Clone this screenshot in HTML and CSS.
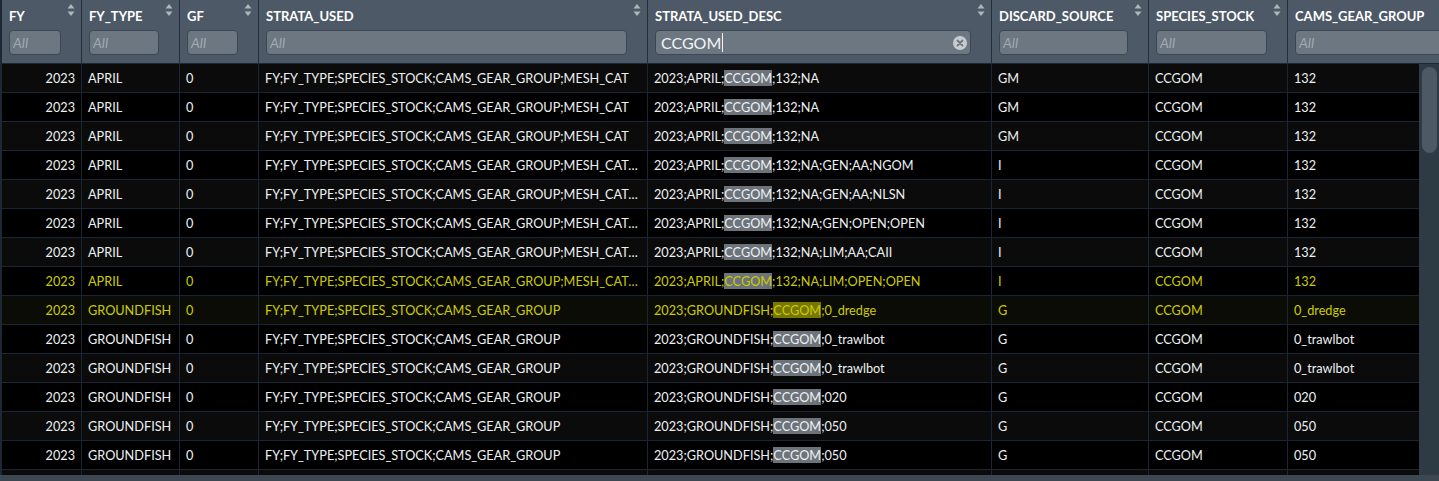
FILE: index.html
```html
<!DOCTYPE html>
<html>
<head>
<meta charset="utf-8">
<link rel="stylesheet" href="styles.css">
</head>
<body>
<div class="grid">
  <div class="thead">
    <div class="th"><div class="th-top"><span class="label">FY</span><svg class="sort" viewBox="0 0 8 12"><path d="M4 0 L7.5 4.5 H0.5 Z M4 12 L7.5 7.5 H0.5 Z"/></svg></div><div class="filter"><input placeholder="All"></div></div>
    <div class="th"><div class="th-top"><span class="label">FY_TYPE</span><svg class="sort" viewBox="0 0 8 12"><path d="M4 0 L7.5 4.5 H0.5 Z M4 12 L7.5 7.5 H0.5 Z"/></svg></div><div class="filter"><input placeholder="All"></div></div>
    <div class="th"><div class="th-top"><span class="label">GF</span><svg class="sort" viewBox="0 0 8 12"><path d="M4 0 L7.5 4.5 H0.5 Z M4 12 L7.5 7.5 H0.5 Z"/></svg></div><div class="filter"><input placeholder="All"></div></div>
    <div class="th"><div class="th-top"><span class="label">STRATA_USED</span><svg class="sort" viewBox="0 0 8 12"><path d="M4 0 L7.5 4.5 H0.5 Z M4 12 L7.5 7.5 H0.5 Z"/></svg></div><div class="filter"><input placeholder="All"></div></div>
    <div class="th"><div class="th-top"><span class="label">STRATA_USED_DESC</span><svg class="sort" viewBox="0 0 8 12"><path d="M4 0 L7.5 4.5 H0.5 Z M4 12 L7.5 7.5 H0.5 Z"/></svg></div><div class="filter active"><span class="val">CCGOM</span><span class="caret"></span><svg class="clear" viewBox="0 0 14 14"><circle cx="7" cy="7" r="7"/><path d="M4.5 4.5 L9.5 9.5 M9.5 4.5 L4.5 9.5"/></svg></div></div>
    <div class="th"><div class="th-top"><span class="label">DISCARD_SOURCE</span><svg class="sort" viewBox="0 0 8 12"><path d="M4 0 L7.5 4.5 H0.5 Z M4 12 L7.5 7.5 H0.5 Z"/></svg></div><div class="filter"><input placeholder="All"></div></div>
    <div class="th"><div class="th-top"><span class="label">SPECIES_STOCK</span><svg class="sort" viewBox="0 0 8 12"><path d="M4 0 L7.5 4.5 H0.5 Z M4 12 L7.5 7.5 H0.5 Z"/></svg></div><div class="filter"><input placeholder="All"></div></div>
    <div class="th"><div class="th-top"><span class="label">CAMS_GEAR_GROUP</span><svg class="sort" viewBox="0 0 8 12"><path d="M4 0 L7.5 4.5 H0.5 Z M4 12 L7.5 7.5 H0.5 Z"/></svg></div><div class="filter"><input placeholder="All"></div></div>
  </div>
  <div class="body">
    <div class="rows">
      <div class="row"><div class="td num">2023</div><div class="td">APRIL</div><div class="td">0</div><div class="td strata">FY;FY_TYPE;SPECIES_STOCK;CAMS_GEAR_GROUP;MESH_CAT</div><div class="td">2023;APRIL;<mark>CCGOM</mark>;132;NA</div><div class="td">GM</div><div class="td">CCGOM</div><div class="td">132</div></div>
      <div class="row"><div class="td num">2023</div><div class="td">APRIL</div><div class="td">0</div><div class="td strata">FY;FY_TYPE;SPECIES_STOCK;CAMS_GEAR_GROUP;MESH_CAT</div><div class="td">2023;APRIL;<mark>CCGOM</mark>;132;NA</div><div class="td">GM</div><div class="td">CCGOM</div><div class="td">132</div></div>
      <div class="row"><div class="td num">2023</div><div class="td">APRIL</div><div class="td">0</div><div class="td strata">FY;FY_TYPE;SPECIES_STOCK;CAMS_GEAR_GROUP;MESH_CAT</div><div class="td">2023;APRIL;<mark>CCGOM</mark>;132;NA</div><div class="td">GM</div><div class="td">CCGOM</div><div class="td">132</div></div>
      <div class="row"><div class="td num">2023</div><div class="td">APRIL</div><div class="td">0</div><div class="td strata">FY;FY_TYPE;SPECIES_STOCK;CAMS_GEAR_GROUP;MESH_CAT;GEARCODE;REGION</div><div class="td">2023;APRIL;<mark>CCGOM</mark>;132;NA;GEN;AA;NGOM</div><div class="td">I</div><div class="td">CCGOM</div><div class="td">132</div></div>
      <div class="row"><div class="td num">2023</div><div class="td">APRIL</div><div class="td">0</div><div class="td strata">FY;FY_TYPE;SPECIES_STOCK;CAMS_GEAR_GROUP;MESH_CAT;GEARCODE;REGION</div><div class="td">2023;APRIL;<mark>CCGOM</mark>;132;NA;GEN;AA;NLSN</div><div class="td">I</div><div class="td">CCGOM</div><div class="td">132</div></div>
      <div class="row"><div class="td num">2023</div><div class="td">APRIL</div><div class="td">0</div><div class="td strata">FY;FY_TYPE;SPECIES_STOCK;CAMS_GEAR_GROUP;MESH_CAT;GEARCODE;REGION</div><div class="td">2023;APRIL;<mark>CCGOM</mark>;132;NA;GEN;OPEN;OPEN</div><div class="td">I</div><div class="td">CCGOM</div><div class="td">132</div></div>
      <div class="row"><div class="td num">2023</div><div class="td">APRIL</div><div class="td">0</div><div class="td strata">FY;FY_TYPE;SPECIES_STOCK;CAMS_GEAR_GROUP;MESH_CAT;GEARCODE;REGION</div><div class="td">2023;APRIL;<mark>CCGOM</mark>;132;NA;LIM;AA;CAII</div><div class="td">I</div><div class="td">CCGOM</div><div class="td">132</div></div>
      <div class="row sel"><div class="td num">2023</div><div class="td">APRIL</div><div class="td">0</div><div class="td strata">FY;FY_TYPE;SPECIES_STOCK;CAMS_GEAR_GROUP;MESH_CAT;GEARCODE;REGION</div><div class="td">2023;APRIL;<mark>CCGOM</mark>;132;NA;LIM;OPEN;OPEN</div><div class="td">I</div><div class="td">CCGOM</div><div class="td">132</div></div>
      <div class="row sel hover"><div class="td num">2023</div><div class="td">GROUNDFISH</div><div class="td">0</div><div class="td strata">FY;FY_TYPE;SPECIES_STOCK;CAMS_GEAR_GROUP</div><div class="td">2023;GROUNDFISH;<mark>CCGOM</mark>;0_dredge</div><div class="td">G</div><div class="td">CCGOM</div><div class="td">0_dredge</div></div>
      <div class="row"><div class="td num">2023</div><div class="td">GROUNDFISH</div><div class="td">0</div><div class="td strata">FY;FY_TYPE;SPECIES_STOCK;CAMS_GEAR_GROUP</div><div class="td">2023;GROUNDFISH;<mark>CCGOM</mark>;0_trawlbot</div><div class="td">G</div><div class="td">CCGOM</div><div class="td">0_trawlbot</div></div>
      <div class="row"><div class="td num">2023</div><div class="td">GROUNDFISH</div><div class="td">0</div><div class="td strata">FY;FY_TYPE;SPECIES_STOCK;CAMS_GEAR_GROUP</div><div class="td">2023;GROUNDFISH;<mark>CCGOM</mark>;0_trawlbot</div><div class="td">G</div><div class="td">CCGOM</div><div class="td">0_trawlbot</div></div>
      <div class="row"><div class="td num">2023</div><div class="td">GROUNDFISH</div><div class="td">0</div><div class="td strata">FY;FY_TYPE;SPECIES_STOCK;CAMS_GEAR_GROUP</div><div class="td">2023;GROUNDFISH;<mark>CCGOM</mark>;020</div><div class="td">G</div><div class="td">CCGOM</div><div class="td">020</div></div>
      <div class="row"><div class="td num">2023</div><div class="td">GROUNDFISH</div><div class="td">0</div><div class="td strata">FY;FY_TYPE;SPECIES_STOCK;CAMS_GEAR_GROUP</div><div class="td">2023;GROUNDFISH;<mark>CCGOM</mark>;050</div><div class="td">G</div><div class="td">CCGOM</div><div class="td">050</div></div>
      <div class="row"><div class="td num">2023</div><div class="td">GROUNDFISH</div><div class="td">0</div><div class="td strata">FY;FY_TYPE;SPECIES_STOCK;CAMS_GEAR_GROUP</div><div class="td">2023;GROUNDFISH;<mark>CCGOM</mark>;050</div><div class="td">G</div><div class="td">CCGOM</div><div class="td">050</div></div>
      <div class="row"><div class="td num">2023</div><div class="td">GROUNDFISH</div><div class="td">0</div><div class="td strata">FY;FY_TYPE;SPECIES_STOCK;CAMS_GEAR_GROUP</div><div class="td">2023;GROUNDFISH;<mark>CCGOM</mark>;060</div><div class="td">G</div><div class="td">CCGOM</div><div class="td">060</div></div>
    </div>
    <div class="vscroll"><div class="thumb"></div></div>
  </div>
  <div class="hscroll"></div>
</div>
</body>
</html>
```
FILE: styles.css
```css
html, body {
  margin: 0;
  padding: 0;
  background: #2f3b44;
}

.grid {
  width: 1439px;
  height: 481px;
  overflow: hidden;
  display: flex;
  flex-direction: column;
  background: #000;
  font-family: Lato, "Open Sans", sans-serif;
}

.thead {
  flex: none;
  display: grid;
  grid-template-columns: 80px 98px 79px 389px 344px 157px 139px 200px;
  height: 64px;
  box-sizing: border-box;
  background: #4d5966;
  border-left: 2px solid #1c2834;
  border-bottom: 1px solid #1c2834;
}

.th {
  min-width: 0;
  box-sizing: border-box;
  border-right: 1px solid #222e3a;
  padding: 8px 6px 0 7px;
}

.th-top {
  display: flex;
  justify-content: space-between;
  align-items: flex-start;
  height: 17px;
}

.label {
  font-weight: 700;
  font-size: 13px;
  line-height: 17px;
  color: #ffffff;
  white-space: nowrap;
}

.sort {
  flex: none;
  width: 8px;
  height: 12px;
  margin-top: -4px;
  fill: #aeb6be;
}

.filter {
  margin-top: 5px;
  margin-right: 14px;
  height: 25px;
  box-sizing: border-box;
  background: #6c7781;
  border: 1px solid #3b4753;
  border-radius: 4px;
  padding: 0 3px;
  display: flex;
  align-items: center;
}

.filter input {
  width: 100%;
  min-width: 0;
  border: none;
  outline: none;
  background: transparent;
  padding: 0;
  font-family: Lato, "Open Sans", sans-serif;
  font-size: 14px;
  color: #fff;
}

.filter input::placeholder {
  color: #a1aab2;
  font-style: italic;
}

.filter.active {
  padding: 0 3px 0 5px;
}

.val {
  font-size: 16px;
  color: #f2f4f5;
  line-height: 20px;
}

.caret {
  width: 1px;
  height: 19px;
  margin-left: 1px;
  background: #f2f4f5;
}

.clear {
  margin-left: auto;
  width: 14px;
  height: 14px;
}

.clear circle {
  fill: #c8ccd0;
}

.clear path {
  stroke: #6c7781;
  stroke-width: 1.8;
  stroke-linecap: round;
}

.body {
  flex: 1;
  min-height: 0;
  display: flex;
}

.rows {
  flex: 1;
  min-width: 0;
  overflow: hidden;
  border-left: 2px solid #1c2834;
}

.row {
  display: grid;
  grid-template-columns: 80px 98px 79px 389px 344px 157px 139px 200px;
  height: 29px;
  box-sizing: border-box;
  border-bottom: 1px solid #1a2633;
  background: #000;
}

.row:nth-child(odd) {
  background: #0b0b0b;
}

.row.hover {
  background: #0c0c07;
}

.td {
  min-width: 0;
  box-sizing: border-box;
  border-right: 1px solid #1a2633;
  padding: 1px 6px 0 6px;
  line-height: 27px;
  font-size: 12.7px;
  color: #eef1f3;
  white-space: nowrap;
  overflow: hidden;
  text-overflow: ellipsis;
}

.td.strata {
  padding-right: 8px;
}

.td.num {
  text-align: right;
}

.row.sel .td {
  color: #cccc00;
}

mark {
  background: #6c737a;
  color: inherit;
}

.row.hover mark {
  background: #777700;
}

.vscroll {
  flex: none;
  width: 20px;
  box-sizing: border-box;
  padding: 3px 2px 0 3px;
  background: #2f3b44;
}

.thumb {
  height: 86px;
  border-radius: 8px;
  background: #4d5a66;
}

.hscroll {
  flex: none;
  height: 6px;
  background: #3c4751;
}
```
